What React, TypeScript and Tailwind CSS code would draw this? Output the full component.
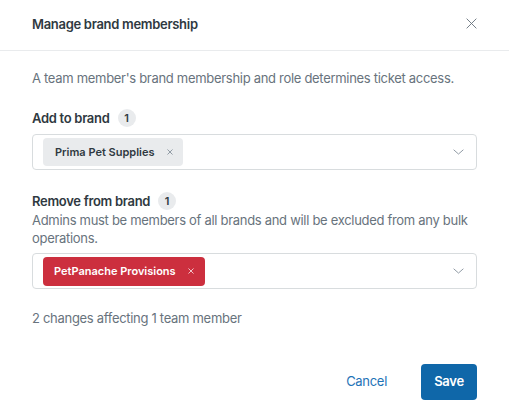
import React from "react";

function XIcon({ className }: { className?: string }) {
  return (
    <svg viewBox="0 0 12 12" className={className} fill="none" stroke="currentColor" strokeLinecap="round">
      <path d="M1 1l10 10M11 1L1 11" />
    </svg>
  );
}

function SmallX({ className }: { className?: string }) {
  return (
    <svg viewBox="0 0 8 8" className={className} fill="none" stroke="currentColor" strokeLinecap="round" strokeWidth="1.2">
      <path d="M1 1l6 6M7 1L1 7" />
    </svg>
  );
}

function Chevron() {
  return (
    <svg viewBox="0 0 12 6" className="w-[11px] h-[6px] text-[#87929d]" fill="none" stroke="currentColor" strokeLinecap="round" strokeLinejoin="round" strokeWidth="1">
      <path d="M1 0.8l5 4.4 5-4.4" />
    </svg>
  );
}

function Badge() {
  return (
    <span className="inline-flex items-center justify-center w-[18px] h-[18px] rounded-full bg-[#e9ebed] text-[11px] font-semibold text-[#2f3941] leading-none tracking-normal">
      1
    </span>
  );
}

export default function App() {
  return (
    <div
      className="w-[509px] h-[418px] bg-white text-[#2f3941] flex flex-col tracking-[-0.3px]"
      style={{ fontFamily: "Inter, 'Noto Sans', sans-serif" }}
    >
      <div className="h-[51px] border-b border-[#e9ebed] flex items-start justify-between pl-8 pr-8 pt-[14px]">
        <h1 className="text-[13px] leading-5 font-semibold text-[#2f3941]">Manage brand membership</h1>
        <button className="mt-[4px] text-[#68737d]">
          <XIcon className="w-[11px] h-[11px]" />
        </button>
      </div>

      <div className="px-8 pt-[17px] flex flex-col">
        <p className="text-[13px] leading-5 text-[#68737d]">
          A team member's brand membership and role determines ticket access.
        </p>

        <div className="mt-[20px] flex items-center gap-2 h-5">
          <span className="text-[13px] leading-5 font-semibold">Add to brand</span>
          <Badge />
        </div>
        <div className="mt-[6px] h-[36px] border border-[#d8dcde] rounded flex items-center pl-[10px] pr-[12px] justify-between">
          <span className="h-[28px] rounded bg-[#e9ebed] flex items-center pl-[12px] pr-[10px] gap-[12px] text-[11px] tracking-normal font-semibold text-[#2f3941]">
            Prima Pet Supplies
            <SmallX className="w-[6px] h-[6px] text-[#87929d]" />
          </span>
          <Chevron />
        </div>

        <div className="mt-[21px] flex items-center gap-2 h-5">
          <span className="text-[13px] leading-5 font-semibold">Remove from brand</span>
          <Badge />
        </div>
        <p className="text-[13px] leading-[18px] text-[#68737d]">
          Admins must be members of all brands and will be excluded from any bulk operations.
        </p>
        <div className="mt-[6px] h-[36px] border border-[#d8dcde] rounded flex items-center pl-[10px] pr-[12px] justify-between">
          <span className="h-[29px] rounded bg-[#cc2f3e] flex items-center pl-[11px] pr-[11px] gap-[12px] text-[11px] tracking-normal font-semibold text-white">
            PetPanache Provisions
            <SmallX className="w-[6px] h-[6px] text-[#f5d5d8]" />
          </span>
          <Chevron />
        </div>

        <p className="mt-[19px] text-[13px] leading-5 text-[#68737d]">2 changes affecting 1 team member</p>

        <div className="mt-[36px] flex justify-end items-center gap-[18px]">
          <button className="h-[36px] px-[16px] text-[13px] text-[#1f73b7]">Cancel</button>
          <button className="h-[36px] w-[56px] rounded bg-[#0f67a9] text-white text-[13px] font-semibold">Save</button>
        </div>
      </div>
    </div>
  );
}
